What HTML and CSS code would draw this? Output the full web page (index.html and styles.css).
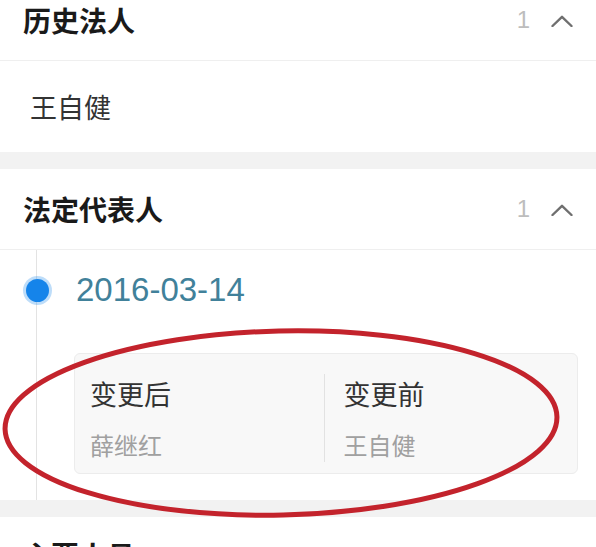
FILE: index.html
```html
<!DOCTYPE html>
<html lang="zh-CN">
  <head>
    <meta charset="UTF-8" />
    <meta name="viewport" content="width=device-width, initial-scale=1.0" />
    <title>法定代表人</title>
    <link rel="stylesheet" href="styles.css">
  </head>
  <body>
    <div class="page">
      <section class="block">
        <div class="block-head">
          <h2>历史法人</h2>
          <div class="meta">
            <span class="count">1</span>
            <svg class="chevron" width="22" height="12" viewBox="0 0 22 12">
              <polyline points="1.5,11 11,1.8 20.5,11" />
            </svg>
          </div>
        </div>
        <div class="plain">王自健</div>
      </section>

      <section class="block">
        <div class="block-head">
          <h2>法定代表人</h2>
          <div class="meta">
            <span class="count">1</span>
            <svg class="chevron" width="22" height="12" viewBox="0 0 22 12">
              <polyline points="1.5,11 11,1.8 20.5,11" />
            </svg>
          </div>
        </div>
        <div class="timeline">
          <div class="event">
            <div class="event-date"><span class="dot"></span>2016-03-14</div>
            <div class="change-card">
              <div class="change-col">
                <div class="change-label">变更后</div>
                <div class="change-value">薛继红</div>
              </div>
              <div class="change-col">
                <div class="change-label">变更前</div>
                <div class="change-value">王自健</div>
              </div>
            </div>
          </div>
        </div>
      </section>

      <section class="block">
        <div class="block-head next-head">
          <h2>主要人员</h2>
        </div>
      </section>

      <!-- red marker drawn over the screenshot -->
      <svg class="annotation" width="596" height="210" viewBox="0 0 596 210">
        <ellipse cx="281" cy="103" rx="276" ry="92" transform="rotate(-1.3 281 103)" />
      </svg>
    </div>
  </body>
</html>
```

FILE: styles.css
```css
body {
  margin: 0;
  background-color: #f2f2f2;
  font-family: "Noto Sans CJK SC", "Liberation Sans", sans-serif;
  color: #333;
  overflow: hidden;
}

.page {
  position: relative;
  margin-top: -20px;
  display: flex;
  flex-direction: column;
  gap: 17px;
}

.block {
  background: white;
}

.block-head {
  height: 80px;
  display: flex;
  align-items: center;
  justify-content: space-between;
  padding: 0 23px 0 23px;
  border-bottom: 1px solid #efefef;
}

.block-head h2 {
  margin: 0;
  font-size: 28px;
  font-weight: 600;
  color: #1a1a1a;
  line-height: 40px;
}

.next-head {
  align-items: flex-start;
  padding-top: 18px;
}

.meta {
  display: flex;
  align-items: center;
  gap: 21px;
}

.count {
  font-family: "Liberation Sans", sans-serif;
  font-size: 24px;
  color: #bdbdbd;
  line-height: 30px;
}

.chevron {
  display: block;
  margin-top: 2px;
}

.chevron polyline {
  fill: none;
  stroke: #6f6f6f;
  stroke-width: 2.4;
  stroke-linecap: round;
  stroke-linejoin: round;
}

.plain {
  padding: 32px 30px;
  font-size: 27px;
  line-height: 27px;
  color: #333;
}

.timeline {
  margin-left: 36px;
  border-left: 1px solid #e3e3e3;
  padding: 20px 18px 26px 0;
}

.event-date {
  display: flex;
  align-items: center;
  font-family: "Liberation Sans", sans-serif;
  font-size: 33px;
  line-height: 40px;
  color: #41819a;
}

.dot {
  width: 23px;
  height: 23px;
  border-radius: 50%;
  background-color: #1584ea;
  box-shadow: 0 0 0 3px rgba(21, 132, 234, 0.28);
  margin-left: -11px;
  margin-right: 27px;
}

.change-card {
  margin: 43px 0 0 37px;
  display: flex;
  padding: 20px 0 11px;
  background-color: #f8f8f8;
  border: 1px solid #ececec;
  border-radius: 6px;
}

.change-col {
  flex: 1;
  padding-left: 15px;
}

.change-col + .change-col {
  border-left: 1px solid #e2e2e2;
  padding-left: 19px;
}

.change-label {
  font-size: 27px;
  line-height: 40px;
  color: #333;
}

.change-value {
  margin-top: 14px;
  font-size: 24px;
  line-height: 34px;
  color: #a0a0a0;
}

.annotation {
  position: absolute;
  left: 0;
  top: 340px;
  pointer-events: none;
}

.annotation ellipse {
  fill: none;
  stroke: #c3232c;
  stroke-width: 5;
}
```
